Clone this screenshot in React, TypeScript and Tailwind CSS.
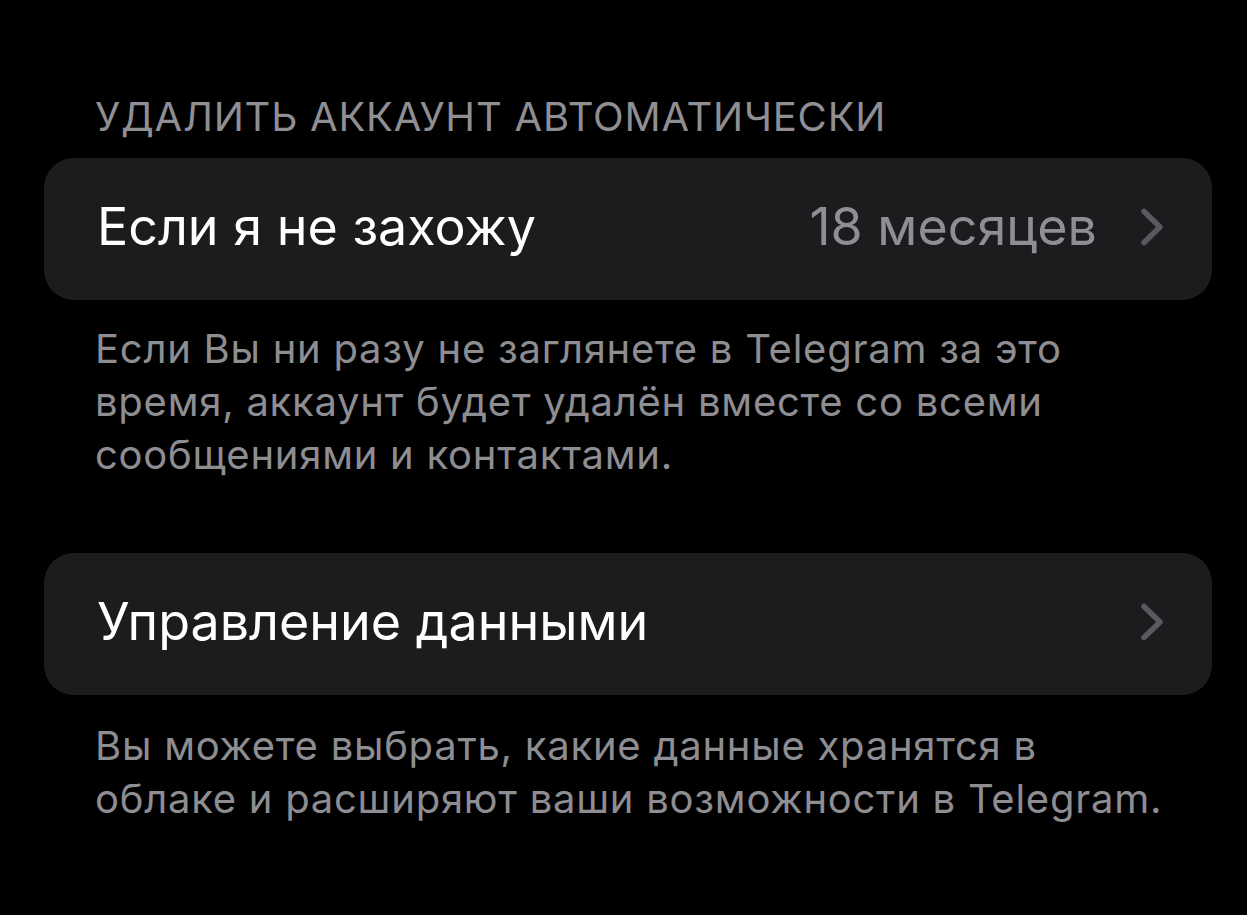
import React from "react";

function Chevron() {
  return (
    <svg width="24" height="40" viewBox="0 0 24 40" fill="none" className="shrink-0">
      <path d="M4 4.5 L20 20 L4 35.5" stroke="#5a5a5e" strokeWidth="5.5" strokeLinecap="round" strokeLinejoin="round" />
    </svg>
  );
}

function Row({ title, value }: { title: string; value?: string }) {
  return (
    <div className="flex h-[142px] items-center rounded-[30px] bg-[#1c1c1e] pb-[5px] pl-[53px] pr-[48px]">
      <span className="flex-1 text-[52px] text-white">{title}</span>
      {value ? <span className="mr-[43px] text-[52px] text-[#8e8e93]">{value}</span> : null}
      <Chevron />
    </div>
  );
}

export default function App() {
  return (
    <div
      className="min-h-[915px] w-full bg-black pl-[44px] pr-[35px] pt-[93px]"
      style={{ fontFamily: "Inter, 'Noto Sans', sans-serif" }}
    >
      <p className="pl-[51px] text-[40px] leading-[48px] tracking-[0.8px] text-[#8e8e93]">
        УДАЛИТЬ АККАУНТ АВТОМАТИЧЕСКИ
      </p>
      <div className="mt-[17px]">
        <Row title="Если я не захожу" value="18 месяцев" />
      </div>
      <p className="mt-[22px] pl-[51px] text-[40px] leading-[53px] tracking-[0.75px] text-[#8d8d92]">
        Если Вы ни разу не заглянете в Telegram за это
        <br />
        время, аккаунт будет удалён вместе со всеми
        <br />
        сообщениями и контактами.
      </p>
      <div className="mt-[72px]">
        <Row title="Управление данными" />
      </div>
      <p className="mt-[24px] pl-[51px] text-[40px] leading-[53px] tracking-[0.75px] text-[#8d8d92]">
        Вы можете выбрать, какие данные хранятся в
        <br />
        облаке и расширяют ваши возможности в Telegram.
      </p>
    </div>
  );
}
